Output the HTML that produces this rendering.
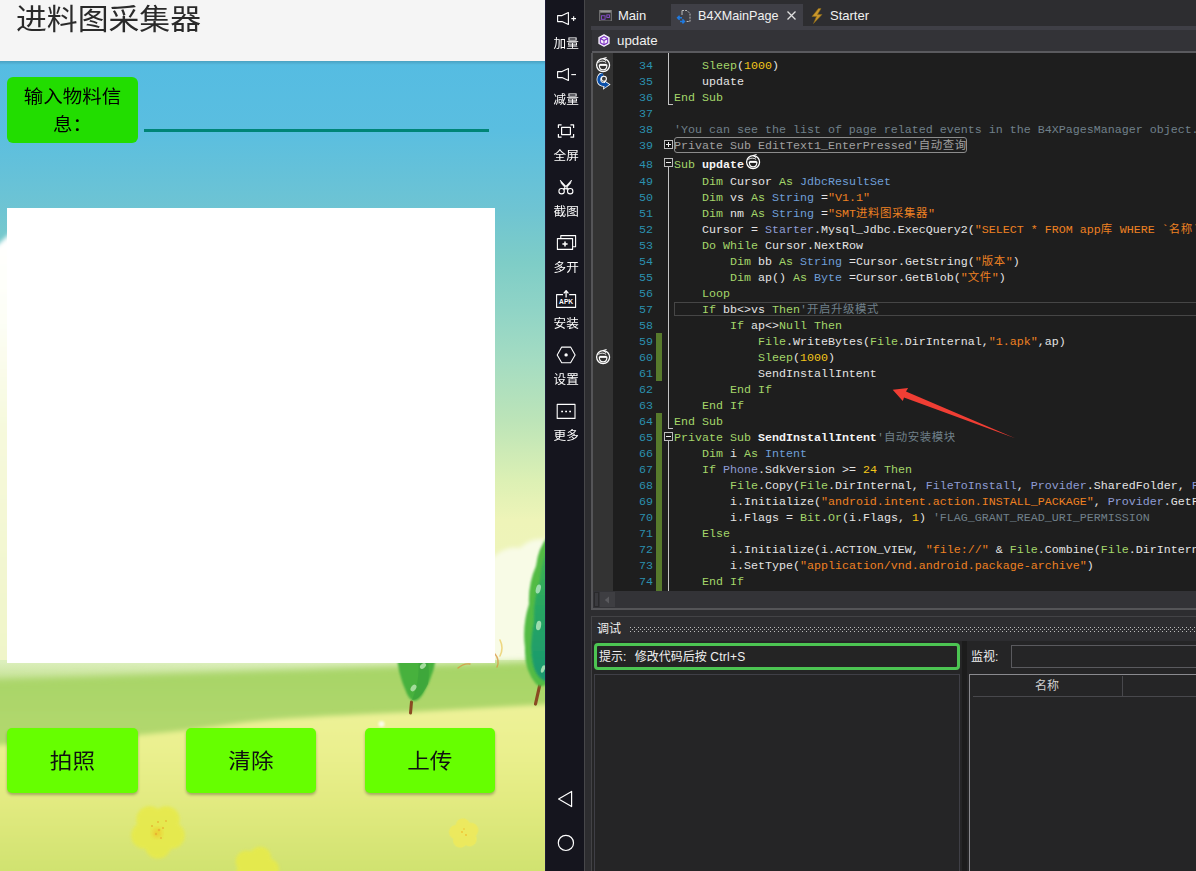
<!DOCTYPE html>
<html lang="zh">
<head>
<meta charset="utf-8">
<title>进料图采集器</title>
<style>
*{box-sizing:border-box;margin:0;padding:0}
html,body{width:1196px;height:871px;overflow:hidden;background:#2d2d30}
body{position:relative;font-family:"Liberation Sans","Noto Sans CJK SC",sans-serif}
.abs{position:absolute}
/* ---------- phone ---------- */
#phone{position:absolute;left:0;top:0;width:545px;height:871px;overflow:hidden;background:#f5f5f5}
#bg{position:absolute;left:0;top:61px;width:545px;height:810px}
#title{position:absolute;left:16px;top:-6px;font-size:29px;line-height:46px;color:#2a2a2a;font-family:"Noto Sans CJK SC","Liberation Sans",sans-serif;white-space:nowrap;font-weight:400;transform:scaleX(1.063);transform-origin:0 50%}
#lbl{position:absolute;left:7px;top:77px;width:131px;height:65.6px;background:#22dd00;border-radius:6px;color:#000;font-size:18.1px;line-height:28px;text-align:center;padding-top:4px;font-family:"Noto Sans CJK SC",sans-serif}
#lbl div,.btn div{transform:scaleX(1.075);transform-origin:50% 50%}
#uline{position:absolute;left:144px;top:129px;width:345px;height:3px;background:#008577}
#white{position:absolute;left:7px;top:207.6px;width:487.9px;height:455.4px;background:#fff}
.btn{position:absolute;top:728.1px;width:130px;height:65px;background:#66ff00;border-radius:5px;color:#111;font-size:21px;line-height:62px;text-align:center;box-shadow:0 2px 3px rgba(0,0,0,.28);font-family:"Noto Sans CJK SC",sans-serif}
/* ---------- sidebar ---------- */
#side{position:absolute;left:545px;top:0;width:39px;height:871px;background:#15151e;border-left:1px solid #1d1b36}
.sl{position:absolute;left:-1px;width:42.4px;transform:scaleX(1.05);text-align:center;color:#fff;font-size:12px;line-height:14px;font-family:"Noto Sans CJK SC",sans-serif;white-space:nowrap}
.si{position:absolute;left:0;width:41px}
/* ---------- ide ---------- */
#ide{position:absolute;left:584px;top:0;width:612px;height:871px;background:#2d2d30;overflow:hidden}

.tab{position:absolute;top:8px;color:#f1f1f1;font-size:13px;line-height:15px;white-space:nowrap;font-family:"Liberation Sans","Noto Sans CJK SC",sans-serif}
.cn{position:absolute;color:#f1f1f1;font-size:12px;line-height:16px;white-space:nowrap;font-family:"Liberation Sans","Noto Sans CJK SC",sans-serif}
#code{position:absolute;left:9px;top:53px;width:603px;height:538px;background:#1e1e1e;overflow:hidden}
#lines{position:absolute;left:0;top:-52px}
.ln{position:absolute;left:0;height:16px;line-height:16px;white-space:pre;font-family:"Liberation Mono","Noto Sans CJK SC",monospace;font-size:11.667px;color:#e4e4e4}
.no{position:absolute;left:20px;width:40px;text-align:right;color:#2b91af}
.tx{position:absolute;left:81px;top:0}
.ln i{font-style:normal;font-size:11.4px;letter-spacing:0.6px;line-height:1px;font-family:"Noto Sans CJK SC",sans-serif}
.k{color:#a4d66a}.t{color:#6f9fd8}.m{color:#8e9cd4}.s{color:#ee8122}.n{color:#f2c61a}.c{color:#70808a}.b{font-weight:bold;color:#f4f4f4}
.col{color:#a0a0a0}
.fold{position:absolute;left:71px;width:9px;height:9px;border:1px solid #bcbcbc;background:#111}
.fold b{position:absolute;background:#f0f0f0}
.bm{position:absolute;left:2px;width:16px;height:16px}
</style>
</head>
<body>
<div id="phone">
  <div id="title">进料图采集器</div>
  <svg id="bg" viewBox="0 61 545 810" preserveAspectRatio="none">
    <defs>
      <linearGradient id="sky" gradientUnits="userSpaceOnUse" x1="0" y1="61" x2="0" y2="700">
        <stop offset="0" stop-color="#55bce2"/>
        <stop offset="0.108" stop-color="#5abee0"/>
        <stop offset="0.23" stop-color="#6ec4d3"/>
        <stop offset="0.315" stop-color="#7ecdc7"/>
        <stop offset="0.39" stop-color="#90d4c6"/>
        <stop offset="0.468" stop-color="#a4dcc2"/>
        <stop offset="0.562" stop-color="#bce4b8"/>
        <stop offset="0.656" stop-color="#dcf0b4"/>
        <stop offset="0.718" stop-color="#eef4b8"/>
        <stop offset="1" stop-color="#eef6c0"/>
      </linearGradient>
      <linearGradient id="lglow" gradientUnits="userSpaceOnUse" x1="0" y1="235" x2="0" y2="665">
        <stop offset="0" stop-color="#ffffff"/>
        <stop offset="0.2" stop-color="#fdfef6"/>
        <stop offset="0.45" stop-color="#f6f9dc"/>
        <stop offset="1" stop-color="#f0f5c8"/>
      </linearGradient>
      <linearGradient id="mist" gradientUnits="userSpaceOnUse" x1="0" y1="662" x2="0" y2="682">
        <stop offset="0" stop-color="#dcefbc"/>
        <stop offset="1" stop-color="#c2e090"/>
      </linearGradient>
      <linearGradient id="treeg" gradientUnits="userSpaceOnUse" x1="0" y1="545" x2="0" y2="682">
        <stop offset="0" stop-color="#42b44e"/>
        <stop offset="0.45" stop-color="#28a662"/>
        <stop offset="1" stop-color="#1a9870"/>
      </linearGradient>
      <linearGradient id="hill" gradientUnits="userSpaceOnUse" x1="0" y1="665" x2="0" y2="735">
        <stop offset="0" stop-color="#a6d466"/>
        <stop offset="0.5" stop-color="#acd66a"/>
        <stop offset="1" stop-color="#b2d86e"/>
      </linearGradient>
      <linearGradient id="field" gradientUnits="userSpaceOnUse" x1="0" y1="700" x2="0" y2="871">
        <stop offset="0" stop-color="#eef29a"/>
        <stop offset="0.3" stop-color="#eaf08e"/>
        <stop offset="0.65" stop-color="#e0e97e"/>
        <stop offset="1" stop-color="#d0e270"/>
      </linearGradient>
      <filter id="b3" x="-5%" y="-20%" width="110%" height="140%"><feGaussianBlur stdDeviation="2.6"/></filter>
      <filter id="b4h" x="-5%" y="-20%" width="110%" height="140%"><feGaussianBlur stdDeviation="3.5"/></filter>
      <filter id="b2" x="-20%" y="-20%" width="140%" height="140%"><feGaussianBlur stdDeviation="2"/></filter>
      <filter id="b4" x="-30%" y="-30%" width="160%" height="160%"><feGaussianBlur stdDeviation="4"/></filter>
      <filter id="b15" x="-20%" y="-20%" width="140%" height="140%"><feGaussianBlur stdDeviation="1.4"/></filter>
      <filter id="b1" x="-20%" y="-20%" width="140%" height="140%"><feGaussianBlur stdDeviation="0.8"/></filter>
      <g id="flower">
        <circle cx="0" cy="-12" r="11"/><circle cx="11.4" cy="-3.7" r="11"/><circle cx="7" cy="9.7" r="11"/><circle cx="-7" cy="9.7" r="11"/><circle cx="-11.4" cy="-3.7" r="11"/><circle cx="0" cy="0" r="9"/>
      </g>
    </defs>
    <rect x="0" y="61" width="545" height="810" fill="url(#sky)"/>
    <!-- left glow / cloud -->
    <path d="M-10 252 L14 230 V668 H-10 Z" fill="url(#lglow)" filter="url(#b2)"/>
    <!-- right cloud -->
    <path d="M490 560 Q505 545 520 548 Q532 536 550 540 V680 H490 Z" fill="#f8fbe6" filter="url(#b2)"/>
    <!-- hills -->
    <rect x="0" y="660" width="545" height="92" fill="url(#mist)"/>
    <path d="M-10 680 Q200 673 555 661 V760 H-10 Z" fill="url(#hill)" filter="url(#b4h)"/>
    <path d="M-10 746 L0 745 C60 741 120 737 165 732.6 C210 728 240 722 273 719.5 C320 716 370 714 412 712 L545 704.6 L555 704 V880 H-10 Z" fill="url(#field)" filter="url(#b3)"/>
    <!-- small tree -->
    <path d="M411.5 702 L410.5 713" stroke="#8a4a22" stroke-width="3" stroke-linecap="round"/>
    <path d="M397 642 Q416 630 437 642 Q438 668 423 694 Q414 708 407 694 Q395 668 397 642 Z" fill="#46b13e" filter="url(#b1)"/>
    <path d="M417 650 Q432 652 428 684 Q420 700 412 700 Q422 676 417 650 Z" fill="#3aa23a" opacity="0.7"/>
    <ellipse cx="423" cy="666" rx="3.5" ry="2.2" fill="#a4dc9c" transform="rotate(-40 423 666)"/>
    <ellipse cx="413.5" cy="688" rx="3.8" ry="2.4" fill="#a4dc9c" transform="rotate(-55 413.5 688)"/>
    <!-- branches -->
    <path d="M458 668 Q464 663 470 664 M495 654 Q500 660 497 667" stroke="#d8923c" stroke-width="1.4" fill="none" stroke-linecap="round" opacity="0.75"/>
    <path d="M500 640 Q504 648 500 656" stroke="#e8c040" stroke-width="1.6" fill="none" stroke-linecap="round" opacity="0.6"/>
    <!-- big tree -->
    <path d="M540 684 L535.5 704" stroke="#8a4a22" stroke-width="3.2" stroke-linecap="round"/>
    <path d="M548 536 Q538 548 536 566 Q528 584 529 604 Q522 626 525 648 Q524 670 536 684 Q542 690 552 680 Z" fill="#52bb44" filter="url(#b1)"/>
    <path d="M550 545 Q541 560 540 580 Q533 600 534 622 Q529 646 533 664 Q537 682 552 682 Z" fill="url(#treeg)" filter="url(#b1)"/>
    <ellipse cx="538.3" cy="589" rx="2.4" ry="4.6" fill="#9ddcae" transform="rotate(15 538.3 589)"/>
    <ellipse cx="538.6" cy="625.5" rx="2.5" ry="4.8" fill="#9ddcae" transform="rotate(10 538.6 625.5)"/>
    <ellipse cx="543" cy="669" rx="1.8" ry="4" fill="#9ddcae" transform="rotate(20 543 669)"/>
    <!-- white dot -->
    <circle cx="381.5" cy="724" r="3" fill="#fbfde8" filter="url(#b1)"/>
    <!-- flowers -->
    <use href="#flower" transform="translate(158 831) scale(1.2) rotate(36)" fill="#e7ea4a" opacity="0.88" filter="url(#b15)"/>
    <circle cx="157" cy="833" r="5" fill="#f0c62c" opacity="0.7" filter="url(#b2)"/>
    <g fill="#e8b030" opacity="0.8"><circle cx="152" cy="826" r="1.1"/><circle cx="158" cy="822" r="1"/><circle cx="163" cy="828" r="1.1"/><circle cx="156" cy="834" r="1.2"/><circle cx="161" cy="838" r="1"/><circle cx="166" cy="821" r="0.9"/><circle cx="159" cy="830" r="1.3"/></g>
    <use href="#flower" transform="translate(256 869) scale(1.0) rotate(20)" fill="#e7ea4a" opacity="0.88" filter="url(#b15)"/>
    <use href="#flower" transform="translate(464 833.5) scale(0.66) rotate(-8)" fill="#eeea5c" opacity="0.9" filter="url(#b1)"/>
    <g fill="#f0c030"><circle cx="462" cy="832" r="0.9"/><circle cx="466" cy="835" r="0.9"/><circle cx="464" cy="829" r="0.8"/></g>
  </svg>
  <div class="abs" style="left:0;top:61px;width:545px;height:4px;background:linear-gradient(rgba(0,0,0,.14),rgba(0,0,0,0))"></div>
  <div id="lbl" lang="zh-CN"><div>输入物料信<br>息：</div></div>
  <div id="uline"></div>
  <div id="white"></div>
  <div class="btn" style="left:7px;width:130.9px"><div>拍照</div></div>
  <div class="btn" style="left:186.2px;width:129.8px"><div>清除</div></div>
  <div class="btn" style="left:365.4px;width:129.7px"><div>上传</div></div>
</div>
<div id="side">
  <svg class="abs" style="left:-1px;top:0" width="39" height="871" viewBox="545 0 39 871" fill="none" stroke="#fff" stroke-width="1.1" stroke-linejoin="round">
    <path d="M557.6 15.6 H562 L568.4 12.6 V24.4 L562 21.6 H557.6 Z"/>
    <path d="M571.3 18.6 H576 M573.65 16.2 V21"/>
    <path d="M557.6 71.6 H562 L568.4 68.6 V80.4 L562 77.6 H557.6 Z"/>
    <path d="M571.3 74.6 H576"/>
    <path d="M558.4 128 V124.8 H561.6 M570.4 124.8 H573.6 V128 M573.6 134 V137.2 H570.4 M561.6 137.2 H558.4 V134" stroke-width="1.2"/>
    <rect x="561.6" y="127.4" width="8.8" height="7.2" stroke-width="1.2"/>
    <circle cx="561.6" cy="191.2" r="2.7"/>
    <circle cx="570.2" cy="191.2" r="2.7"/>
    <path d="M563.2 189 L571.6 180 L570.4 183.6 L565 189.6 Z M568.6 189 L560.2 180 L561.4 183.6 L566.8 189.6 Z" fill="#fff" stroke-width="0.6"/>
    <path d="M560.8 238.2 V235.6 H575.6 V246.8 H573"/>
    <rect x="557.4" y="238.6" width="15.2" height="10.8"/>
    <path d="M562.4 244 H567.6 M565 241.4 V246.6" stroke-width="1.5"/>
    <path d="M563 294.6 H556.6 V307.4 H575.6 V294.6 H569.2"/>
    <path d="M566.1 297.4 V291.8 M563.8 293.4 L566.1 290.6 L568.4 293.4" stroke-width="1.3"/>
    <path d="M557.2 354.9 L561.7 347.1 H570.6 L575.1 354.9 L570.6 362.7 H561.7 Z"/>
    <circle cx="566.1" cy="354.9" r="1.7" fill="#fff" stroke="none"/>
    <rect x="557.2" y="404.4" width="17.8" height="14"/>
    <path d="M561.2 411.4 H563 M565.2 411.4 H567 M569.2 411.4 H571" stroke-width="1.5"/>
    <path d="M558.6 799 L571.6 791.4 V806.6 Z" stroke-width="1.2"/>
    <circle cx="565.9" cy="842.9" r="7.6" stroke-width="1.2"/>
    <text x="566.1" y="304" font-family="Liberation Sans, sans-serif" font-weight="bold" font-size="6.4" fill="#fff" stroke="none" text-anchor="middle" textLength="14" lengthAdjust="spacingAndGlyphs">APK</text>
  </svg>
  <div class="sl" style="top:36px">加量</div>
  <div class="sl" style="top:92px">减量</div>
  <div class="sl" style="top:148px">全屏</div>
  <div class="sl" style="top:204px">截图</div>
  <div class="sl" style="top:260px">多开</div>
  <div class="sl" style="top:316px">安装</div>
  <div class="sl" style="top:372px">设置</div>
  <div class="sl" style="top:428px">更多</div>
</div>
<div id="ide">
  <svg width="0" height="0" style="position:absolute">
    <defs>
      <g id="bmk" fill="none" stroke="currentColor" stroke-linecap="round">
        <circle cx="8.1" cy="8.1" r="6.5" stroke-width="1.25"/>
        <path d="M4.3 8 H11.9 C11.9 14.6 4.3 14.6 4.3 8 Z" stroke-width="1.2" stroke-linejoin="round"/>
        <path d="M4.6 7.8 H11.6" stroke-width="1.9" stroke-linecap="butt"/>
        <path d="M3.6 5.2 C5.6 3.7 8.8 3.7 10.8 5.2" stroke-width="0.9"/>
        <path d="M11.2 0.6 L8 1.5 L10.6 3.4" stroke-width="1"/>
      </g>
      <g id="bmk2">
        <path d="M8 1 C4.4 1.8 3.4 5.4 4 8 C4.6 11 7 11.8 10.6 11.6" fill="none" stroke="#fff" stroke-width="4.4" stroke-linecap="butt"/>
        <path d="M9.2 7.2 L15.6 11.6 L8 16.8 Z" fill="#fff"/>
        <path d="M8 1.4 C4.4 2 3.4 5.4 4 8 C4.6 11 7 11.8 10.6 11.6" fill="none" stroke="#0a4fa8" stroke-width="3"/>
        <path d="M10 8.8 L14.2 11.6 L9.2 15.2 Z" fill="#0a4fa8"/>
        <circle cx="8.9" cy="5.8" r="2.5" fill="#3c3c3c" stroke="#fff" stroke-width="1.1"/>
      </g>
    </defs>
  </svg>
  <div class="abs" style="left:0;top:0;width:1px;height:871px;background:#47474a"></div>
  <!-- tabs -->
  <div class="abs" id="tabact" style="left:87px;top:4px;width:132px;height:23px;background:#3f3f46"></div>
  <div class="abs" style="left:7px;top:26px;width:605px;height:4px;background:#3f3f46"></div>
  <svg class="abs" style="left:14.5px;top:9.5px" width="13" height="11.5" viewBox="0 0 14 13">
    <rect x="0.5" y="0.5" width="13" height="12" fill="#2d2d30" stroke="#8a8a8a"/>
    <rect x="1" y="1" width="12" height="2" fill="#9a9a9a"/>
    <rect x="2.5" y="6.5" width="4" height="4" fill="none" stroke="#8a4fd0"/>
    <rect x="8.5" y="5.5" width="3" height="3" fill="none" stroke="#8a4fd0"/>
  </svg>
  <div class="tab" style="left:34px">Main</div>
  <svg class="abs" style="left:92px;top:8px" width="16" height="16" viewBox="0 0 16 16">
    <path d="M6 2.5 H11 L14 5.5 V13.5 H9.5" fill="none" stroke="#bdbdbd" stroke-dasharray="2 1.1"/>
    <path d="M6 2.5 V7" fill="none" stroke="#bdbdbd"/>
    <path d="M1.6 9.8 H6 M3.6 7.8 L1.6 9.8 L3.6 11.8" fill="none" stroke="#1f7ae0" stroke-width="1.5"/>
    <path d="M4 13.4 H8.4 M6.4 11.4 L8.4 13.4 L6.4 15.4" fill="none" stroke="#1f7ae0" stroke-width="1.5"/>
  </svg>
  <div class="tab" style="left:114px;top:9px;font-size:12.6px">B4XMainPage</div>
  <svg class="abs" style="left:202px;top:10px" width="11" height="11" viewBox="0 0 11 11"><path d="M1.5 1.5 L9.5 9.5 M9.5 1.5 L1.5 9.5" stroke="#e0e0e0" stroke-width="1.3" fill="none"/></svg>
  <svg class="abs" style="left:226px;top:8px" width="14" height="16" viewBox="0 0 14 16"><path d="M8.5 0.5 L2 8.5 H6.5 L3.5 15.5 L12 6.5 H7.5 L11 0.5 Z" fill="#c9962b" stroke="#8a6a1a" stroke-width="0.6"/></svg>
  <div class="tab" style="left:246px">Starter</div>
  <!-- sub header -->
  <div class="abs" style="left:8px;top:30px;width:604px;height:22px;background:#333337"></div>
  <div class="abs" style="left:8px;top:51px;width:604px;height:2px;background:#5a5a5e"></div>
  <svg class="abs" style="left:13.5px;top:34px" width="12" height="13" viewBox="0 0 13 14">
    <path d="M6.5 0.8 L12 3.8 V10.2 L6.5 13.2 L1 10.2 V3.8 Z" fill="#f3ecfb" stroke="#f3ecfb" stroke-width="1.2" stroke-linejoin="round"/>
    <path d="M6.5 2.6 L10.5 4.8 V9.4 L6.5 11.6 L2.5 9.4 V4.8 Z M2.5 4.8 L6.5 7 L10.5 4.8 M6.5 7 V11.6" fill="none" stroke="#7a2fc0" stroke-width="1.1" stroke-linejoin="round"/>
  </svg>
  <div class="tab" style="left:33px;top:33px;font-size:13.3px">update</div>
  <!-- code -->
  <div id="code">
    <div class="abs" style="left:0;top:0;width:20px;height:540px;background:#333333"></div>
    <div class="abs" style="left:63px;top:280px;width:6px;height:48px;background:#577a2c"></div>
    <div class="abs" style="left:63px;top:360px;width:6px;height:180px;background:#577a2c"></div>
    <!-- fold lines -->
    <div class="abs" style="left:75px;top:0;width:1px;height:52px;background:#c4c4c4"></div>
    <div class="abs" style="left:75px;top:51px;width:5px;height:1px;background:#c4c4c4"></div>
    <div class="abs" style="left:75px;top:114px;width:1px;height:262px;background:#c4c4c4"></div>
    <div class="abs" style="left:75px;top:375px;width:5px;height:1px;background:#c4c4c4"></div>
    <div class="abs" style="left:75px;top:388px;width:1px;height:152px;background:#c4c4c4"></div>
    <div class="fold" style="top:87px"><b style="left:1px;top:3px;width:5px;height:1px"></b><b style="left:3px;top:1px;width:1px;height:5px"></b></div>
    <div class="fold" style="top:105px;background:#1c1c1c"><b style="left:1px;top:3px;width:5px;height:1px"></b></div>
    <div class="fold" style="top:379px;background:#1c1c1c"><b style="left:1px;top:3px;width:5px;height:1px"></b></div>
    <div class="abs" style="left:81px;top:84px;width:293px;height:16px;border:1px solid #8c8c8c;border-radius:3px"></div>
    <svg class="abs" style="left:152px;top:101px;width:16px;height:16px;color:#fff" viewBox="0 0 16 16"><use href="#bmk"/></svg>
    <!-- current line -->
    <div class="abs" style="left:81px;top:249px;width:540px;height:14px;border:1.5px solid #464646"></div>
    <svg class="bm" style="top:4px;color:#fff" viewBox="0 0 16 16"><use href="#bmk"/></svg>
    <svg class="bm" style="top:20px;height:17px" viewBox="0 0 16 17"><use href="#bmk2"/></svg>
    <svg class="bm" style="top:296px;color:#fff" viewBox="0 0 16 16"><use href="#bmk"/></svg>
    <div id="lines">
<div class="ln" style="top:57px"><span class="no">34</span><span class="tx">    <span class="k">Sleep</span>(<span class="n">1000</span>)</span></div>
<div class="ln" style="top:73px"><span class="no">35</span><span class="tx">    update</span></div>
<div class="ln" style="top:89px"><span class="no">36</span><span class="tx"><span class="k">End Sub</span></span></div>
<div class="ln" style="top:105px"><span class="no">37</span><span class="tx"></span></div>
<div class="ln" style="top:121px"><span class="no">38</span><span class="tx"><span class="c">'You can see the list of page related events in the B4XPagesManager object. The event name is B4XPage.</span></span></div>
<div class="ln" style="top:137px"><span class="no">39</span><span class="tx"><span class="col">Private Sub EditText1_EnterPressed'<i>自动查询</i></span></span></div>
<div class="ln" style="top:156px"><span class="no">48</span><span class="tx"><span class="k">Sub</span> <span class="b">update</span></span></div>
<div class="ln" style="top:173px"><span class="no">49</span><span class="tx">    <span class="k">Dim</span> Cursor <span class="k">As</span> <span class="t">JdbcResultSet</span></span></div>
<div class="ln" style="top:189px"><span class="no">50</span><span class="tx">    <span class="k">Dim</span> vs <span class="k">As</span> <span class="t">String</span> =<span class="s">"V1.1"</span></span></div>
<div class="ln" style="top:205px"><span class="no">51</span><span class="tx">    <span class="k">Dim</span> nm <span class="k">As</span> <span class="t">String</span> =<span class="s">"SMT<i>进料图采集器</i>"</span></span></div>
<div class="ln" style="top:221px"><span class="no">52</span><span class="tx">    Cursor = <span class="m">Starter</span>.Mysql_Jdbc.ExecQuery2(<span class="s">"SELECT * FROM app<i>库</i> WHERE `<i>名称</i>`=?"</span>, <span class="k">Array As String</span>(nm))</span></div>
<div class="ln" style="top:237px"><span class="no">53</span><span class="tx">    <span class="k">Do While</span> Cursor.NextRow</span></div>
<div class="ln" style="top:253px"><span class="no">54</span><span class="tx">        <span class="k">Dim</span> bb <span class="k">As</span> <span class="t">String</span> =Cursor.GetString(<span class="s">"<i>版本</i>"</span>)</span></div>
<div class="ln" style="top:269px"><span class="no">55</span><span class="tx">        <span class="k">Dim</span> ap() <span class="k">As</span> <span class="t">Byte</span> =Cursor.GetBlob(<span class="s">"<i>文件</i>"</span>)</span></div>
<div class="ln" style="top:285px"><span class="no">56</span><span class="tx">    <span class="k">Loop</span></span></div>
<div class="ln" style="top:301px"><span class="no">57</span><span class="tx">    <span class="k">If</span> bb&lt;&gt;vs <span class="k">Then</span><span class="c">'<i>开启升级模式</i></span></span></div>
<div class="ln" style="top:317px"><span class="no">58</span><span class="tx">        <span class="k">If</span> ap&lt;&gt;<span class="k">Null</span> <span class="k">Then</span></span></div>
<div class="ln" style="top:333px"><span class="no">59</span><span class="tx">            <span class="k">File</span>.WriteBytes(<span class="k">File</span>.DirInternal,<span class="s">"1.apk"</span>,ap)</span></div>
<div class="ln" style="top:349px"><span class="no">60</span><span class="tx">            <span class="k">Sleep</span>(<span class="n">1000</span>)</span></div>
<div class="ln" style="top:365px"><span class="no">61</span><span class="tx">            SendInstallIntent</span></div>
<div class="ln" style="top:381px"><span class="no">62</span><span class="tx">        <span class="k">End If</span></span></div>
<div class="ln" style="top:397px"><span class="no">63</span><span class="tx">    <span class="k">End If</span></span></div>
<div class="ln" style="top:413px"><span class="no">64</span><span class="tx"><span class="k">End Sub</span></span></div>
<div class="ln" style="top:429px"><span class="no">65</span><span class="tx"><span class="k">Private Sub</span> <span class="b">SendInstallIntent</span><span class="c">'<i>自动安装模块</i></span></span></div>
<div class="ln" style="top:445px"><span class="no">66</span><span class="tx">    <span class="k">Dim</span> i <span class="k">As</span> <span class="t">Intent</span></span></div>
<div class="ln" style="top:461px"><span class="no">67</span><span class="tx">    <span class="k">If</span> <span class="m">Phone</span>.SdkVersion &gt;= <span class="n">24</span> <span class="k">Then</span></span></div>
<div class="ln" style="top:477px"><span class="no">68</span><span class="tx">        <span class="k">File</span>.Copy(<span class="k">File</span>.DirInternal, <span class="m">FileToInstall</span>, <span class="m">Provider</span>.SharedFolder, <span class="m">FileToInstall</span>)</span></div>
<div class="ln" style="top:493px"><span class="no">69</span><span class="tx">        i.Initialize(<span class="s">"android.intent.action.INSTALL_PACKAGE"</span>, <span class="m">Provider</span>.GetFileUri(FileToInstall))</span></div>
<div class="ln" style="top:509px"><span class="no">70</span><span class="tx">        i.Flags = <span class="k">Bit</span>.<span class="k">Or</span>(i.Flags, <span class="n">1</span>) <span class="c">'FLAG_GRANT_READ_URI_PERMISSION</span></span></div>
<div class="ln" style="top:525px"><span class="no">71</span><span class="tx">    <span class="k">Else</span></span></div>
<div class="ln" style="top:541px"><span class="no">72</span><span class="tx">        i.Initialize(i.ACTION_VIEW, <span class="s">"file://"</span> &amp; <span class="k">File</span>.Combine(<span class="k">File</span>.DirInternal, FileToInstall))</span></div>
<div class="ln" style="top:557px"><span class="no">73</span><span class="tx">        i.SetType(<span class="s">"application/vnd.android.package-archive"</span>)</span></div>
<div class="ln" style="top:573px"><span class="no">74</span><span class="tx">    <span class="k">End If</span></span></div>
    </div>
    <svg class="abs" style="left:290px;top:325px" width="140" height="70" viewBox="883 378 140 70"><polygon points="892.7,389.8 908.1,388.1 906,391.5 1015.2,438.2 904,397.5 902.8,401" fill="#f03e34"/></svg>
  </div>
  <!-- h scrollbar -->
  <div class="abs" style="left:9px;top:591px;width:603px;height:17px;background:#333337"></div>
  <div class="abs" style="left:10px;top:592px;width:5px;height:15px;background:#3a3a3e;border:1px solid #2a2a2c"></div>
  <div class="abs" style="left:16px;top:592px;width:15px;height:15px;background:#3e3e42"></div>
  <svg class="abs" style="left:20px;top:596px" width="6" height="8" viewBox="0 0 6 8"><path d="M5 0.5 V7.5 L0.8 4 Z" fill="#5a5a5e"/></svg>
  <div class="abs" style="left:7px;top:53px;width:2px;height:556px;background:#555558"></div>
  <div class="abs" style="left:7px;top:608px;width:605px;height:1.5px;background:#555558"></div>
  <!-- debug panel -->
  <div class="abs" style="left:7px;top:616px;width:605px;height:255px;border:1px solid #434346;border-right:0;border-bottom:0"></div>
  <div class="cn" style="left:13px;top:621px">调试</div>
  <svg class="abs" style="left:46px;top:627px" width="566" height="5" shape-rendering="crispEdges"><defs><pattern id="gp" width="4" height="4" patternUnits="userSpaceOnUse"><rect x="0" y="0" width="1" height="1" fill="#bdbdbd"/><rect x="2" y="2" width="1" height="1" fill="#bdbdbd"/></pattern></defs><rect width="566" height="5" fill="url(#gp)"/></svg>
  <div class="abs" style="left:8px;top:641px;width:604px;height:230px;background:#252526"></div>
  <div class="abs" style="left:10px;top:643px;width:366px;height:27px;border:3px solid #4cc552;border-radius:4px;background:#242424"></div>
  <div class="cn" style="left:15px;top:649px">提示:<span style="display:inline-block;width:8.5px"></span>修改代码后按 <span style="letter-spacing:0.3px">Ctrl+S</span></div>
  <div class="abs" style="left:10px;top:674px;width:366px;height:200px;border:1px solid #3f3f46;background:#252526"></div>
  <div class="abs" style="left:378px;top:641px;width:5px;height:230px;background:#1c1c1c"></div>
  <div class="cn" style="left:387px;top:649px">监视:</div>
  <div class="abs" style="left:427px;top:645px;width:190px;height:23px;border:1px solid #5a5a5e;background:#252526"></div>
  <div class="abs" style="left:385px;top:674px;width:232px;height:200px;border:1px solid #8a8a8e;background:#252526"></div>
  <div class="abs" style="left:389px;top:696px;width:223px;height:1px;background:#48484c"></div>
  <div class="abs" style="left:538px;top:676px;width:1px;height:21px;background:#48484c"></div>
  <div class="cn" style="left:387px;top:678px;width:152px;text-align:center;color:#d0d0d0">名称</div>
</div>

</body>
</html>
